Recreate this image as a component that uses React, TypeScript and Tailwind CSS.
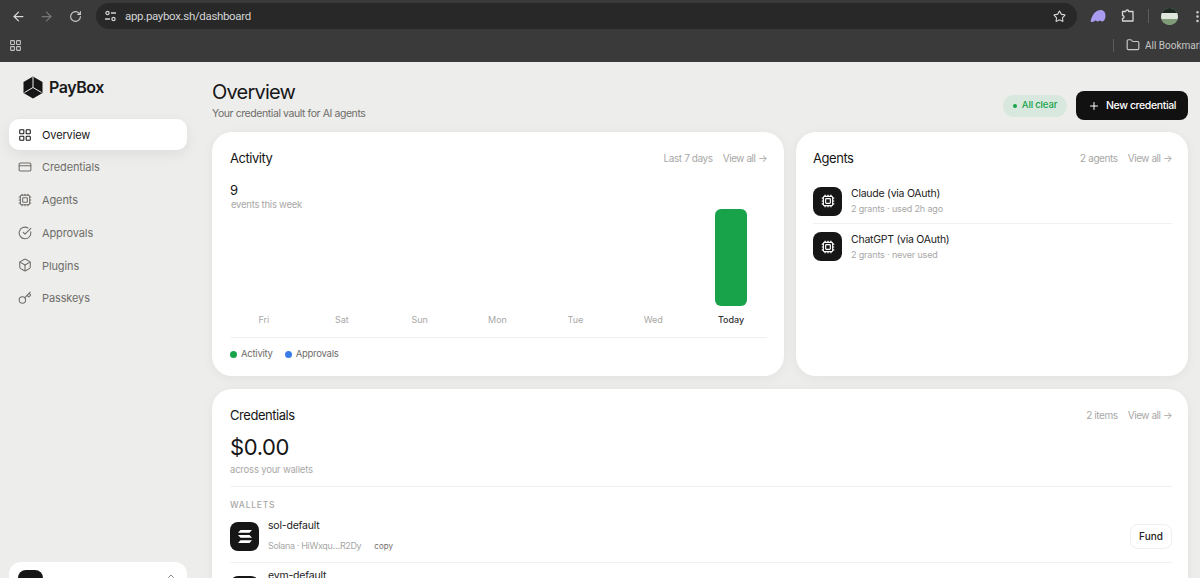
import React from "react";
import {
  ArrowLeft,
  ArrowRight,
  RotateCw,
  Star,
  Folder,
  EllipsisVertical,
  LayoutGrid,
  CreditCard,
  Cpu,
  CircleCheckBig,
  Box,
  Key,
  Plus,
  ChevronsUpDown,
} from "lucide-react";

const days = ["Fri", "Sat", "Sun", "Mon", "Tue", "Wed", "Today"];

const navItems = [
  { label: "Overview", icon: LayoutGrid, active: true },
  { label: "Credentials", icon: CreditCard },
  { label: "Agents", icon: Cpu },
  { label: "Approvals", icon: CircleCheckBig },
  { label: "Plugins", icon: Box },
  { label: "Passkeys", icon: Key },
];

// Browser toolbar + bookmarks row
const BrowserChrome = () => (
  <div className="h-[62px] shrink-0 bg-[#3a3a3a] text-[#c7c7c7] font-['Roboto',sans-serif]">
    <div className="h-[32px] flex items-center pl-[11px] overflow-hidden">
      <ArrowLeft className="shrink-0 w-[15px] h-[15px] text-[#d8d8d8]" />
      <ArrowRight className="shrink-0 w-[15px] h-[15px] ml-[13px] text-[#777777]" />
      <RotateCw className="shrink-0 w-[13px] h-[13px] ml-[15px] text-[#d0d0d0]" />
      <div className="shrink-0 ml-[14px] w-[981px] h-[26px] rounded-full bg-[#282828] flex items-center pl-[8px] pr-[11px]">
        <svg width="13" height="12" viewBox="0 0 13 12" fill="none" stroke="#d0d0d0" strokeWidth="1.3">
          <circle cx="3.5" cy="3" r="1.6" />
          <path d="M7 3h5M1 9h5" />
          <circle cx="9.5" cy="9" r="1.6" />
        </svg>
        <span className="ml-[8px] mt-[2px] text-[11.500px] tracking-[-0.33px] text-[#d4d4d4]">app.paybox.sh/dashboard</span>
        <Star className="ml-auto w-[13px] h-[13px] text-[#dcdcdc]" />
      </div>
      <svg className="shrink-0 ml-[13px]" width="16" height="14" viewBox="0 0 16 14" fill="#a99cf0">
        <path d="M0.500 12.500C2 6 5.500 1 10.500 1c3.500 0 5 2.500 5 5.500 0 3.500-1.500 6-3.500 6-1 0-1.300-1-2-1s-1 1-2.300 1c-1 0-1.200-1-2.200-1s-1.500 1.500-3 1.500c-1 0-1.800-.2-2-1z" />
      </svg>
      <svg className="shrink-0 ml-[15px]" width="14" height="14" viewBox="0 0 14 14" fill="none" stroke="#d6d6d6" strokeWidth="1.300" strokeLinejoin="round">
        <path d="M1.500 2.500h3.200c0-2 3-2 3 0h4.300v9.500H1.500V9.500c2 0 2-3 0-3z" />
      </svg>
      <div className="shrink-0 ml-[13px] w-px h-[14px] bg-[#5c5c5c]" />
      <div className="shrink-0 ml-[12px] w-[17px] h-[17px] rounded-full overflow-hidden bg-[#8fae8c] flex flex-col">
        <div className="h-[5px] bg-[#1f2a24]" />
        <div className="h-[6px] bg-[#dfe6dc]" />
        <div className="flex-1 bg-[#7f9b78]" />
      </div>
      <EllipsisVertical className="shrink-0 ml-[12px] w-[15px] h-[15px] text-[#d0d0d0]" />
    </div>
    <div className="h-[30px] flex items-center pl-[9px] pb-[4px]">
      <LayoutGrid className="w-[13px] h-[13px] text-[#c4c4c4]" />
      <div className="ml-auto flex items-center">
        <div className="w-px h-[13px] bg-[#5c5c5c]" />
        <Folder className="ml-[12px] w-[14px] h-[14px] text-[#c9c9c9]" />
        <span className="ml-[5px] w-[55px] overflow-hidden whitespace-nowrap text-[10px] text-[#c7c7c7]">All Bookmarks</span>
      </div>
    </div>
  </div>
);

const Sidebar = () => (
  <aside className="w-[212px] shrink-0 flex flex-col pl-[9px] pr-[25px] overflow-hidden">
    <div className="h-[57px] flex items-center pl-[14px] pb-[7px]">
      <svg width="20" height="23" viewBox="0 0 20 23">
        <path d="M10 0.500 19.500 6v11L10 22.500.5 17V6z" fill="#161616" />
        <path d="M10 1v10.500M10 11.500 1.500 16.500M10 11.500l8.500 5" stroke="#ececeb" strokeWidth="1" fill="none" />
      </svg>
      <span className="ml-[6px] text-[16px] font-semibold tracking-[-0.45px] text-[#1a1a1a]">PayBox</span>
    </div>
    <nav className="flex flex-col gap-[1.700px]">
      {navItems.map(({ label, icon: Icon, active }) => (
        <div
          key={label}
          className={
            active
              ? "h-[31px] flex items-center pl-[9px] rounded-[10px] bg-white text-[#161616] shadow-[0_4px_14px_rgba(0,0,0,0.07)]"
              : "h-[31px] flex items-center pl-[9px] rounded-[10px] text-[#6f6d69]"
          }
        >
          <Icon className="w-[14px] h-[14px]" strokeWidth={1.8} />
          <span className="ml-[10px] mt-[1px] text-[11px] tracking-[-0.12px]">{label}</span>
        </div>
      ))}
    </nav>
    <div className="mt-auto -mb-[40px] h-[56px] rounded-[12px] bg-white pl-[9px] pr-[10px] pt-[8px] flex justify-between">
      <div className="w-[25px] h-[25px] rounded-[8px] bg-[#161616]" />
      <ChevronsUpDown className="w-[12px] h-[12px] mt-[3px] text-[#8a8a8a]" />
    </div>
  </aside>
);

const CardHead = ({ title, meta }: { title: string; meta: string }) => (
  <div className="flex items-center justify-between">
    <h2 className="text-[13px] leading-[16px] tracking-[-0.45px] text-[#161616]">{title}</h2>
    <div className="flex items-center gap-[10px] text-[10px] tracking-[-0.4px] text-[#a8a8a6]">
      <span>{meta}</span>
      <span className="tracking-[-0.45px]">View all →</span>
    </div>
  </div>
);

const ActivityCard = () => (
  <section className="flex-1 h-[244px] rounded-[20px] bg-white pl-[18px] pr-[17px] pt-[18px] flex flex-col shadow-[0_2px_12px_rgba(0,0,0,0.05)]">
    <CardHead title="Activity" meta="Last 7 days" />
    <div className="mt-[16px] text-[13px] leading-[16px] text-[#161616]">9</div>
    <div className="mt-[1px] pl-[1px] text-[9.500px] leading-[12px] tracking-[-0.25px] text-[#a8a8a6]">events this week</div>
    <div className="-mt-[2px] -ml-[5px] -mr-[3px] h-[96px] grid grid-cols-7 items-end">
      {days.map((d) => (
        <div key={d} className="flex justify-center">
          {d === "Today" && <div className="w-[32px] h-[97px] rounded-[6px] bg-[#18a34a]" />}
        </div>
      ))}
    </div>
    <div className="mt-[8.500px] -ml-[5px] -mr-[3px] grid grid-cols-7">
      {days.map((d) => (
        <div
          key={d}
          className={
            d === "Today"
              ? "text-center text-[9px] leading-[12px] font-medium text-[#333333]"
              : "text-center text-[9px] leading-[12px] text-[#a8a8a6]"
          }
        >
          {d}
        </div>
      ))}
    </div>
    <div className="mt-[11.500px] border-t border-[#f0f0ee] pt-[10px] flex items-center text-[9.500px] leading-[12px] tracking-[-0.25px] text-[#6f6d69]">
      <span className="w-[7px] h-[7px] rounded-full bg-[#18a34a]" />
      <span className="ml-[4px]">Activity</span>
      <span className="ml-[12px] w-[7px] h-[7px] rounded-full bg-[#3b7de8]" />
      <span className="ml-[4px]">Approvals</span>
    </div>
  </section>
);

const AgentRow = ({ name, sub, last }: { name: string; sub: string; last?: boolean }) => (
  <div className={last ? "flex items-center h-[45px]" : "flex items-center h-[45px] border-b border-[#f0f0ee]"}>
    <div className="w-[29px] h-[29px] rounded-[8px] bg-[#161616] flex items-center justify-center">
      <Cpu className="w-[14px] h-[14px] text-white" strokeWidth={2} />
    </div>
    <div className="ml-[9px] mt-[1px]">
      <div className="text-[10.500px] leading-[14px] tracking-[-0.25px] text-[#222222]">{name}</div>
      <div className="mt-[1px] text-[9px] leading-[14px] tracking-[-0.15px] text-[#a8a8a6]">{sub}</div>
    </div>
  </div>
);

const AgentsCard = () => (
  <section className="w-[392px] h-[244px] rounded-[20px] bg-white pl-[17px] pr-[16px] pt-[18px] shadow-[0_2px_12px_rgba(0,0,0,0.05)]">
    <CardHead title="Agents" meta="2 agents" />
    <div className="mt-[13px]">
      <AgentRow name="Claude (via OAuth)" sub="2 grants · used 2h ago" />
      <AgentRow name="ChatGPT (via OAuth)" sub="2 grants · never used" last />
    </div>
  </section>
);

const CredentialsCard = () => (
  <section className="mt-[13px] rounded-t-[20px] bg-white pl-[18px] pr-[16px] pt-[18px] h-[260px] shadow-[0_2px_12px_rgba(0,0,0,0.05)]">
    <CardHead title="Credentials" meta="2 items" />
    <div className="mt-[10px] text-[22px] leading-[28px] tracking-[-0.4px] text-[#161616]">$0.00</div>
    <div className="mt-[3px] text-[9.500px] leading-[12px] tracking-[-0.2px] text-[#a8a8a6]">across your wallets</div>
    <div className="mt-[10px] border-t border-[#f0f0ee] pt-[13px] text-[8.500px] leading-[11px] font-medium tracking-[0.8px] text-[#a8a8a6]">
      WALLETS
    </div>
    <div className="h-[52px] flex items-center border-b border-[#f0f0ee]">
      <div className="w-[29px] h-[29px] rounded-[8px] bg-[#161616] flex items-center justify-center">
        <svg width="14" height="13" viewBox="0 0 14 13" fill="#ffffff">
          <path d="M2.500 0H14l-2.500 2.800H0zM0 5h11.500L14 7.800H2.500zM2.500 10.200H14L11.500 13H0z" />
        </svg>
      </div>
      <div className="ml-[9px] -mt-[3px]">
        <div className="text-[10.500px] leading-[14px] tracking-[-0.2px] text-[#222222]">sol-default</div>
        <div className="mt-[7px] flex items-center text-[9px] leading-[12px] tracking-[-0.35px] text-[#a8a8a6]">
          <span>Solana · HiWxqu…R2Dy</span>
          <span className="ml-[13px] text-[8px] tracking-[0px] text-[#6f6d69]">copy</span>
        </div>
      </div>
      <button className="ml-auto w-[42px] h-[25px] rounded-[8px] border border-[#efefed] text-[10px] font-medium text-[#222222]">
        Fund
      </button>
    </div>
    <div className="mt-[6px] flex">
      <div className="w-[29px] h-[29px] mt-[7px] rounded-[8px] bg-[#161616]" />
      <div className="ml-[9px] text-[10.500px] leading-[14px] tracking-[-0.2px] text-[#222222]">evm-default</div>
    </div>
  </section>
);

export default function App() {
  return (
    <div className="h-[578px] w-[1200px] overflow-hidden flex flex-col bg-[#ededec] font-['Inter',sans-serif]">
      <BrowserChrome />
      <div className="flex flex-1 min-h-0">
        <Sidebar />
        <main className="flex-1 min-w-0 pr-[12px]">
          <div className="h-[70px] flex items-center justify-between pt-[4px]">
            <div>
              <h1 className="text-[20px] leading-[28px] tracking-[-0.8px] text-[#161616]">Overview</h1>
              <p className="mt-[1px] text-[10.500px] leading-[14px] tracking-[-0.42px] text-[#6f6d69]">Your credential vault for AI agents</p>
            </div>
            <div className="flex items-center mt-[13px]">
              <div className="w-[64px] h-[22px] rounded-full bg-[#d9e8de] flex items-center justify-center text-[9.500px] tracking-[-0.15px] font-medium text-[#18a34a]">
                <span className="w-[4px] h-[4px] rounded-full bg-[#18a34a] mr-[5px]" />
                All clear
              </div>
              <button className="ml-[9px] w-[112px] h-[29px] rounded-[8px] bg-[#111111] flex items-center justify-center text-[10.500px] tracking-[-0.38px] font-medium text-white">
                <Plus className="w-[12px] h-[12px] mr-[6px]" strokeWidth={2} />
                New credential
              </button>
            </div>
          </div>
          <div className="flex gap-[12px]">
            <ActivityCard />
            <AgentsCard />
          </div>
          <CredentialsCard />
        </main>
      </div>
    </div>
  );
}
